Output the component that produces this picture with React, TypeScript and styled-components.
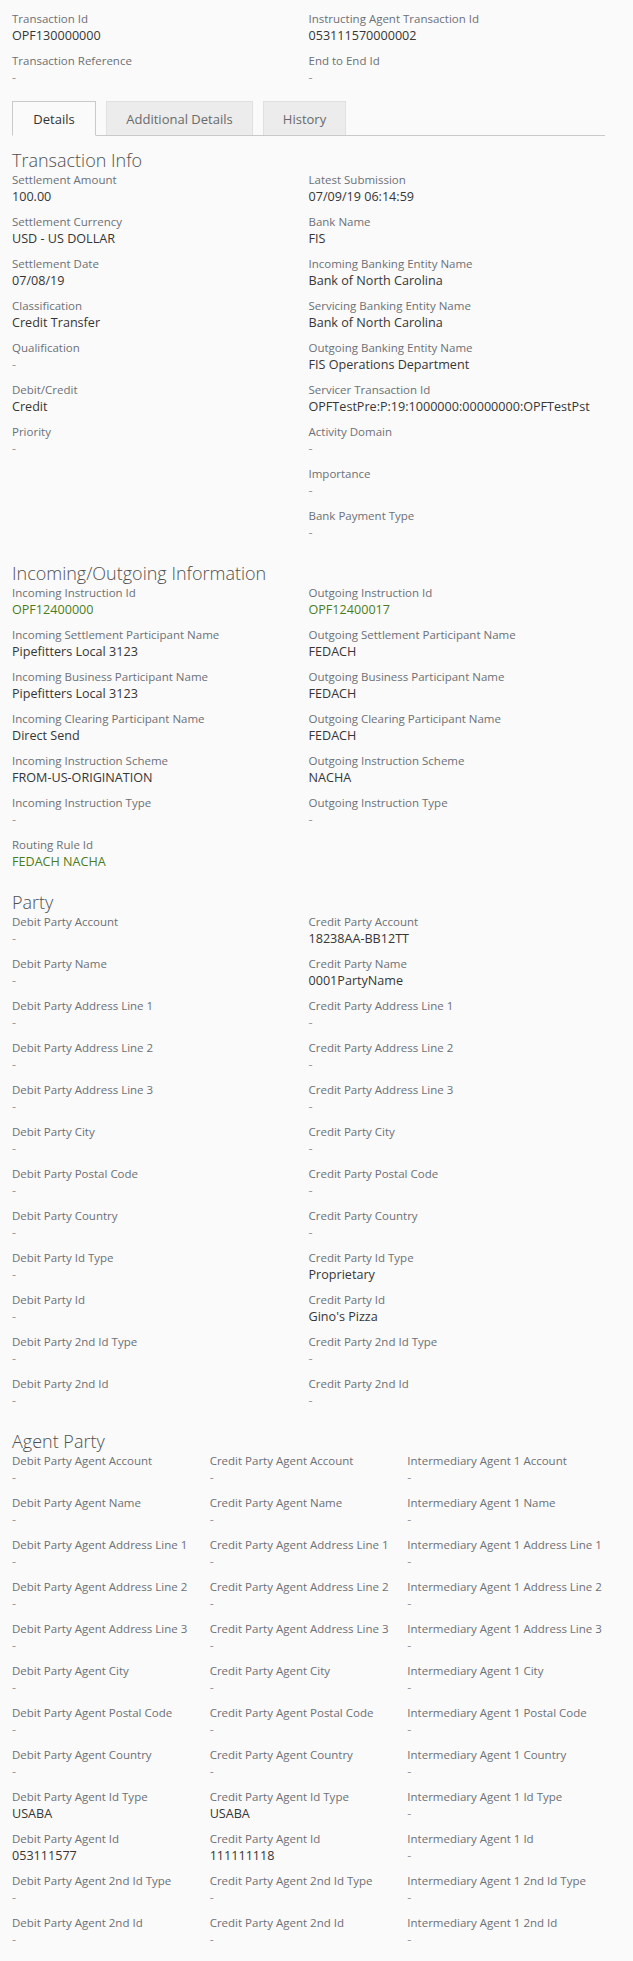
import React from "react";
import styled, { createGlobalStyle } from "styled-components";

const Global = createGlobalStyle`
  html, body { margin: 0; padding: 0; background: #fafafa; }
  body { font-family: "Open Sans", "Liberation Sans", sans-serif; color: #333; }
`;

const Page = styled.div`
  width: 593px;
  padding: 10px 0 2px 12px;
`;

const Grid = styled.div<{ $cols: number }>`
  display: grid;
  grid-template-columns: repeat(${(p) => p.$cols}, 1fr);
`;

const Stack = styled.div`
  display: flex;
  flex-direction: column;
  min-width: 0;
`;

const FieldBox = styled.div`
  height: 42px;
  display: flex;
  flex-direction: column;
`;

const Label = styled.div`
  font-size: 11.5px;
  line-height: 17px;
  color: #6d7076;
  white-space: nowrap;
`;

const Value = styled.div<{ $tone?: "green" | "empty" | "normal" }>`
  font-size: 12.6px;
  line-height: 17px;
  white-space: nowrap;
  color: ${(p) => (p.$tone === "green" ? "#4c7d1c" : p.$tone === "empty" ? "#9a9a9a" : "#363636")};
`;

const TabBar = styled.div`
  display: flex;
  gap: 10px;
  margin-top: 7px;
  height: 35px;
  border-bottom: 1px solid #c9c9c9;
  box-sizing: border-box;
`;

const Tab = styled.div<{ $active?: boolean; $w: number }>`
  width: ${(p) => p.$w}px;
  box-sizing: border-box;
  display: flex;
  align-items: center;
  justify-content: center;
  font-size: 13px;
  color: ${(p) => (p.$active ? "#333" : "#6a6a6a")};
  background: ${(p) => (p.$active ? "#fafafa" : "#ececec")};
  border: 1px solid ${(p) => (p.$active ? "#c9c9c9" : "#e0e0e0")};
  border-bottom: ${(p) => (p.$active ? "1px solid #fafafa" : "none")};
  margin-bottom: ${(p) => (p.$active ? "-1px" : "0")};
  height: ${(p) => (p.$active ? "35px" : "34px")};
`;

const Section = styled.section`
  margin-top: 13px;
`;

const Heading = styled.h2`
  margin: 0;
  font-size: 18px;
  line-height: 22px;
  font-weight: 300;
  color: #505050;
`;

type F = { l: string; v?: string; g?: boolean };

const Field = ({ l, v, g }: F) => (
  <FieldBox>
    <Label>{l}</Label>
    <Value $tone={g ? "green" : v ? "normal" : "empty"}>{v || "-"}</Value>
  </FieldBox>
);

const Cols = ({ cols }: { cols: F[][] }) => (
  <Grid $cols={cols.length}>
    {cols.map((c, i) => (
      <Stack key={i}>
        {c.map((f) => (
          <Field key={f.l} {...f} />
        ))}
      </Stack>
    ))}
  </Grid>
);

const header: F[][] = [
  [{ l: "Transaction Id", v: "OPF130000000" }, { l: "Transaction Reference" }],
  [{ l: "Instructing Agent Transaction Id", v: "053111570000002" }, { l: "End to End Id" }],
];

const txInfo: F[][] = [
  [
    { l: "Settlement Amount", v: "100.00" },
    { l: "Settlement Currency", v: "USD - US DOLLAR" },
    { l: "Settlement Date", v: "07/08/19" },
    { l: "Classification", v: "Credit Transfer" },
    { l: "Qualification" },
    { l: "Debit/Credit", v: "Credit" },
    { l: "Priority" },
  ],
  [
    { l: "Latest Submission", v: "07/09/19 06:14:59" },
    { l: "Bank Name", v: "FIS" },
    { l: "Incoming Banking Entity Name", v: "Bank of North Carolina" },
    { l: "Servicing Banking Entity Name", v: "Bank of North Carolina" },
    { l: "Outgoing Banking Entity Name", v: "FIS Operations Department" },
    { l: "Servicer Transaction Id", v: "OPFTestPre:P:19:1000000:00000000:OPFTestPst" },
    { l: "Activity Domain" },
    { l: "Importance" },
    { l: "Bank Payment Type" },
  ],
];

const io: F[][] = [
  [
    { l: "Incoming Instruction Id", v: "OPF12400000", g: true },
    { l: "Incoming Settlement Participant Name", v: "Pipefitters Local 3123" },
    { l: "Incoming Business Participant Name", v: "Pipefitters Local 3123" },
    { l: "Incoming Clearing Participant Name", v: "Direct Send" },
    { l: "Incoming Instruction Scheme", v: "FROM-US-ORIGINATION" },
    { l: "Incoming Instruction Type" },
    { l: "Routing Rule Id", v: "FEDACH NACHA", g: true },
  ],
  [
    { l: "Outgoing Instruction Id", v: "OPF12400017", g: true },
    { l: "Outgoing Settlement Participant Name", v: "FEDACH" },
    { l: "Outgoing Business Participant Name", v: "FEDACH" },
    { l: "Outgoing Clearing Participant Name", v: "FEDACH" },
    { l: "Outgoing Instruction Scheme", v: "NACHA" },
    { l: "Outgoing Instruction Type" },
  ],
];

const partyKeys = [
  "Account",
  "Name",
  "Address Line 1",
  "Address Line 2",
  "Address Line 3",
  "City",
  "Postal Code",
  "Country",
  "Id Type",
  "Id",
  "2nd Id Type",
  "2nd Id",
];

const creditVals: Record<string, string> = {
  Account: "18238AA-BB12TT",
  Name: "0001PartyName",
  "Id Type": "Proprietary",
  Id: "Gino's Pizza",
};

const party: F[][] = [
  partyKeys.map((k) => ({ l: `Debit Party ${k}` })),
  partyKeys.map((k) => ({ l: `Credit Party ${k}`, v: creditVals[k] })),
];

const agentVals: Record<string, Record<string, string>> = {
  "Debit Party Agent": { "Id Type": "USABA", Id: "053111577" },
  "Credit Party Agent": { "Id Type": "USABA", Id: "111111118" },
  "Intermediary Agent 1": {},
};

const agent: F[][] = Object.keys(agentVals).map((p) =>
  partyKeys.map((k) => ({ l: `${p} ${k}`, v: agentVals[p][k] }))
);

export default function App() {
  return (
    <>
      <Global />
      <Page>
        <Cols cols={header} />
        <TabBar>
          <Tab $active $w={84}>Details</Tab>
          <Tab $w={147}>Additional Details</Tab>
          <Tab $w={83}>History</Tab>
        </TabBar>
        <Section>
          <Heading>Transaction Info</Heading>
          <Cols cols={txInfo} />
        </Section>
        <Section>
          <Heading>Incoming/Outgoing Information</Heading>
          <Cols cols={io} />
        </Section>
        <Section>
          <Heading>Party</Heading>
          <Cols cols={party} />
        </Section>
        <Section>
          <Heading>Agent Party</Heading>
          <Cols cols={agent} />
        </Section>
      </Page>
    </>
  );
}
